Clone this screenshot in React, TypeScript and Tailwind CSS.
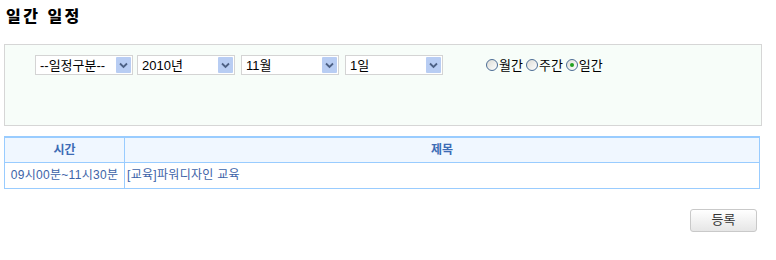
import React from "react";

const font = { fontFamily: '"Liberation Sans", "Noto Sans CJK KR", sans-serif' };

function FakeSelect({ label, width }: { label: string; width: string }) {
  return (
    <div className={`flex h-[20px] items-center justify-between border border-[#d4d4d4] bg-white pl-[4px] pr-[1px] ${width}`}>
      <span className="text-[13px] leading-none text-black">{label}</span>
      <span className="flex h-[16px] w-[15px] items-center justify-center rounded-[1px] bg-[#b8cdf3]">
        <svg width="9" height="7" viewBox="0 0 9 7">
          <path d="M1 1.5 L4.5 5 L8 1.5" fill="none" stroke="#4d6185" strokeWidth="1.8" />
        </svg>
      </span>
    </div>
  );
}

function Radio({ label, checked }: { label: string; checked?: boolean }) {
  return (
    <label className="flex items-center gap-[1px]">
      <span className="flex h-[12px] w-[12px] items-center justify-center rounded-full border border-[#4c6c94] bg-gradient-to-br from-[#dcdcd6] to-white">
        {checked && <span className="h-[4px] w-[4px] rounded-full bg-[#21a121]" />}
      </span>
      <span className="text-[13px] leading-none text-black">{label}</span>
    </label>
  );
}

export default function App() {
  return (
    <div className="h-[260px] w-[776px] bg-white px-[4px] pt-[8px]" style={font}>
      <h1 className="pl-[2px] text-[16px] font-extrabold leading-[18px] tracking-[2.5px] text-black">일간 일정</h1>

      {/* search box */}
      <div className="mt-[18px] h-[82px] w-[758px] border border-[#d6d6d6] bg-[#f7fdf9] pl-[30px] pt-[10px]">
        <div className="flex items-center">
          <div className="flex gap-[4px]">
            <FakeSelect label="--일정구분--" width="w-[98px]" />
            <FakeSelect label="2010년" width="w-[98px]" />
            <div className="ml-[2px]">
              <FakeSelect label="11월" width="w-[98px]" />
            </div>
            <div className="ml-[2px]">
              <FakeSelect label="1일" width="w-[98px]" />
            </div>
          </div>
          <div className="ml-[43px] flex items-center gap-[3px]">
            <Radio label="월간" />
            <Radio label="주간" />
            <Radio label="일간" checked />
          </div>
        </div>
      </div>

      {/* schedule table */}
      <table className="mt-[10px] w-[756px] border-collapse border-t-[2px] border-t-[#99ccff] text-[12px]">
        <thead>
          <tr className="h-[25px] bg-[#f0f7ff]">
            <th className="w-[120px] border border-[#99ccff] border-t-0 font-bold text-[#3d6cb5]">시간</th>
            <th className="border border-[#99ccff] border-t-0 font-bold text-[#3d6cb5]">제목</th>
          </tr>
        </thead>
        <tbody>
          <tr className="h-[26px]">
            <td className="border border-[#99ccff] text-center tracking-[0.3px] text-[#3d63a8]">09시00분~11시30분</td>
            <td className="border border-[#99ccff] pl-[2px] tracking-[0.3px] text-[#3d63a8]">[교육]파워디자인 교육</td>
          </tr>
        </tbody>
      </table>

      <div className="mt-[20px] flex w-[753px] justify-end">
        <button className="h-[23px] w-[67px] rounded-[3px] border border-[#c9c9c9] bg-gradient-to-b from-white to-[#e6e6e6] text-[13px] text-[#333]">
          등록
        </button>
      </div>
    </div>
  );
}
